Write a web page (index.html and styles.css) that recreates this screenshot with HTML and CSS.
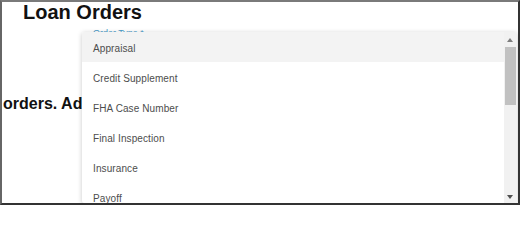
FILE: index.html
```html
<!DOCTYPE html>
<html>
<head>
<meta charset="utf-8">
<link rel="stylesheet" href="styles.css">
</head>
<body>
<div class="frame">
  <h1 class="title">Loan Orders</h1>
  <div class="field-label">Order Type *</div>
  <p class="empty">orders. Add</p>
  <div class="menu">
    <ul class="options">
      <li class="option active">Appraisal</li>
      <li class="option">Credit Supplement</li>
      <li class="option">FHA Case Number</li>
      <li class="option">Final Inspection</li>
      <li class="option">Insurance</li>
      <li class="option">Payoff</li>
    </ul>
    <div class="scrollbar">
      <span class="arrow up"></span>
      <span class="thumb"></span>
      <span class="arrow down"></span>
    </div>
  </div>
</div>
</body>
</html>
```
FILE: styles.css
```css
html, body {
  margin: 0;
  padding: 0;
  background: #ffffff;
}
body {
  font-family: "Liberation Sans", Arial, sans-serif;
}
.frame {
  position: relative;
  box-sizing: border-box;
  width: 520px;
  height: 205px;
  border-top: 2px solid #7a7a7a;
  border-left: 2px solid #666666;
  border-right: 2px solid #333333;
  border-bottom: 2px solid #333333;
  overflow: hidden;
  background: #ffffff;
}
.title {
  margin: 0 0 0 21px;
  font-size: 20px;
  line-height: 20px;
  font-weight: 700;
  color: #111111;
}
.field-label {
  margin: 6px 0 0 91px;
  font-size: 9px;
  line-height: 11px;
  color: #4a9bc9;
}
.empty {
  margin: 55px 0 0 1px;
  font-size: 16px;
  line-height: 20px;
  font-weight: 700;
  color: #111111;
  white-space: nowrap;
}
.menu {
  position: absolute;
  left: 80px;
  top: 30px;
  right: 1px;
  height: 171px;
  background: #ffffff;
  box-shadow: 0 1px 5px rgba(0, 0, 0, 0.22);
  border-radius: 2px;
  overflow: hidden;
}
.options {
  list-style: none;
  margin: 0;
  padding: 0;
  margin-right: 13px;
}
.option {
  box-sizing: border-box;
  height: 30px;
  padding: 3px 0 0 11px;
  line-height: 27px;
  font-size: 10px;
  color: #4d4d4d;
  letter-spacing: 0.1px;
}
.option.active {
  background: #f3f3f3;
}
.scrollbar {
  position: absolute;
  top: 0;
  right: 0;
  bottom: 0;
  width: 13px;
  background: #f1f1f1;
}
.arrow {
  position: absolute;
  left: 3px;
  width: 0;
  height: 0;
  border-left: 3.5px solid transparent;
  border-right: 3.5px solid transparent;
}
.arrow.up {
  top: 6px;
  border-bottom: 4px solid #7d7d7d;
}
.arrow.down {
  top: 163px;
  border-top: 4px solid #505050;
}
.thumb {
  position: absolute;
  left: 1px;
  right: 1px;
  top: 15px;
  height: 58px;
  background: #c1c1c1;
}
```
